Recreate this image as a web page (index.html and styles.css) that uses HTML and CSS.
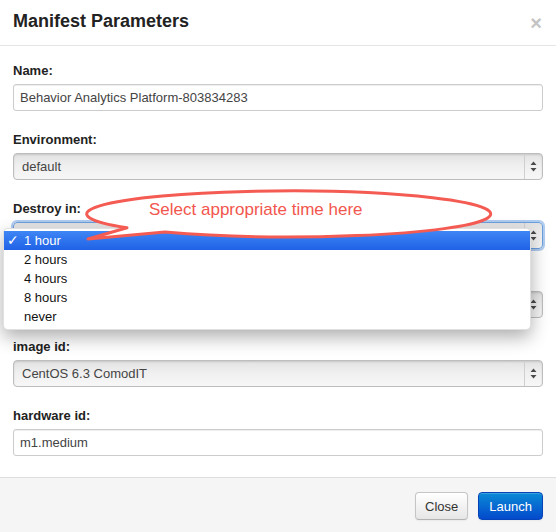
FILE: index.html
```html
<!DOCTYPE html>
<html>
<head>
<meta charset="utf-8">
<link rel="stylesheet" href="styles.css">
</head>
<body>
<div class="modal">
  <div class="modal-header">
    <h3 class="title">Manifest Parameters</h3>
    <span class="close">×</span>
  </div>
  <div class="modal-body">
    <div class="group">
      <label class="lbl">Name:</label>
      <div class="input">Behavior Analytics Platform-803834283</div>
    </div>
    <div class="group">
      <label class="lbl">Environment:</label>
      <div class="select"><span class="val">default</span><span class="arrows"><svg width="7" height="11" viewBox="0 0 7 11"><path d="M3.5 0.5 L6.5 4 L0.5 4 Z M3.5 10.5 L6.5 7 L0.5 7 Z" fill="#4a4a4a"/></svg></span></div>
    </div>
    <div class="group destroy">
      <label class="lbl">Destroy in:</label>
      <div class="select focus"><span class="val"></span><span class="arrows"><svg width="7" height="11" viewBox="0 0 7 11"><path d="M3.5 0.5 L6.5 4 L0.5 4 Z M3.5 10.5 L6.5 7 L0.5 7 Z" fill="#4a4a4a"/></svg></span></div>
      <ul class="menu">
        <li class="item active"><span class="check">✓</span>1 hour</li>
        <li class="item">2 hours</li>
        <li class="item">4 hours</li>
        <li class="item">8 hours</li>
        <li class="item">never</li>
      </ul>
      <svg class="callout" width="556" height="70" viewBox="0 185 556 70">
        <path d="M127 227.7 L88 239 L165 232.1 A202 23 0 1 0 127 227.7 Z" fill="#fff" stroke="#f45b52" stroke-width="3" stroke-linejoin="round"/>
        <text x="149" y="215" class="callout-text">Select appropriate time here</text>
      </svg>
    </div>
    <div class="group">
      <div class="lbl-space"></div>
      <div class="select"><span class="val"></span><span class="arrows"><svg width="7" height="11" viewBox="0 0 7 11"><path d="M3.5 0.5 L6.5 4 L0.5 4 Z M3.5 10.5 L6.5 7 L0.5 7 Z" fill="#4a4a4a"/></svg></span></div>
    </div>
    <div class="group">
      <label class="lbl">image id:</label>
      <div class="select"><span class="val">CentOS 6.3 ComodIT</span><span class="arrows"><svg width="7" height="11" viewBox="0 0 7 11"><path d="M3.5 0.5 L6.5 4 L0.5 4 Z M3.5 10.5 L6.5 7 L0.5 7 Z" fill="#4a4a4a"/></svg></span></div>
    </div>
    <div class="group last">
      <label class="lbl">hardware id:</label>
      <div class="input">m1.medium</div>
    </div>
  </div>
  <div class="modal-footer">
    <button class="btn">Close</button>
    <button class="btn primary">Launch</button>
  </div>
</div>
</body>
</html>
```

FILE: styles.css
```css
* { box-sizing: border-box; }
html, body { margin: 0; padding: 0; background: #fff; }
body {
  font-family: "Liberation Sans", Arial, "DejaVu Sans", sans-serif;
  color: #333;
  font-size: 13px;
  width: 556px;
  height: 532px;
  overflow: hidden;
}
.modal { width: 556px; height: 532px; display: flex; flex-direction: column; }
.modal-header {
  display: flex;
  align-items: center;
  justify-content: space-between;
  padding: 10px 13px 13px 13px;
  border-bottom: 1px solid #e5e5e5;
  height: 46px;
}
.title {
  margin: 0;
  font-size: 18px;
  line-height: 22px;
  font-weight: bold;
  color: #222;
}
.close {
  font-size: 20px;
  font-weight: bold;
  color: #c4c4c4;
  line-height: 20px;
  margin-right: 1px;
  margin-top: 3px;
}
.modal-body {
  padding: 15px 13px 0 13px;
  flex: 1;
}
.group { margin-bottom: 19px; position: relative; }
.group.last { margin-bottom: 0; }
.lbl {
  display: block;
  font-weight: bold;
  font-size: 13px;
  line-height: 20px;
  margin-bottom: 3px;
  color: #222;
}
.lbl-space { height: 20px; margin-bottom: 3px; }
.input {
  height: 27px;
  border: 1px solid #ccc;
  border-radius: 3px;
  box-shadow: inset 0 1px 1px rgba(0,0,0,0.07);
  padding: 0 6px;
  line-height: 25px;
  font-size: 13px;
  color: #444;
  background: #fff;
}
.select {
  height: 27px;
  border: 1px solid #bdbdbd;
  border-radius: 4px;
  background: linear-gradient(to bottom, #e2e2e2 0%, #efefef 45%, #f7f7f7 100%);
  box-shadow: inset 0 1px 2px rgba(0,0,0,0.12);
  display: flex;
  align-items: stretch;
  font-size: 13px;
  color: #444;
}
.select .val { flex: 1; padding-left: 8px; line-height: 25px; }
.select .arrows {
  width: 18px;
  border-left: 1px solid #cfcfcf;
  display: flex;
  align-items: center;
  justify-content: center;
}
.select.focus {
  border-color: #6c9fde;
  box-shadow: 0 0 0 2px rgba(110,160,225,0.55);
}
.menu {
  position: absolute;
  left: -10px;
  top: 29px;
  width: 528px;
  margin: 0;
  padding: 2px 0 3px 0;
  list-style: none;
  background: #fff;
  border: 1px solid rgba(0,0,0,0.12);
  border-radius: 5px;
  box-shadow: 0 7px 18px rgba(0,0,0,0.32);
  z-index: 5;
}
.item {
  height: 19px;
  line-height: 19px;
  padding-left: 20px;
  font-size: 13px;
  color: #111;
  position: relative;
}
.item.active {
  background: linear-gradient(to bottom, #3f86f5, #1f62e6);
  color: #fff;
}
.check {
  position: absolute;
  left: 3px;
  top: 0;
  font-family: "DejaVu Sans", sans-serif;
  font-size: 14px;
  font-weight: bold;
}
.callout {
  position: absolute;
  left: -13px;
  top: -14px;
  z-index: 10;
  overflow: visible;
}
.callout-text {
  font-family: "Liberation Sans", Arial, sans-serif;
  font-size: 17px;
  fill: #f2564e;
}
.modal-footer {
  height: 55px;
  background: #f5f5f5;
  border-top: 1px solid #ddd;
  display: flex;
  justify-content: flex-end;
  align-items: flex-start;
  gap: 10px;
  padding: 14px 13px 0 0;
}
.btn {
  font-family: "Liberation Sans", Arial, sans-serif;
  font-size: 13px;
  height: 28px;
  padding: 0 9px;
  border-radius: 4px;
  border: 1px solid #c5c5c5;
  border-bottom-color: #b3b3b3;
  background: linear-gradient(to bottom, #ffffff, #e6e6e6);
  color: #333;
  box-shadow: inset 0 1px 0 rgba(255,255,255,0.2), 0 1px 2px rgba(0,0,0,0.05);
}
.btn.primary {
  padding: 0 10px;
  background: linear-gradient(to bottom, #0a8ad6, #0449cc);
  border-color: #0444b8;
  color: #fff;
}
```
